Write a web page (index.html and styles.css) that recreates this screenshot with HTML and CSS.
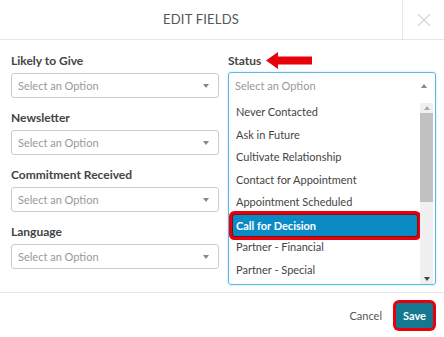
FILE: index.html
```html
<!DOCTYPE html>
<html lang="en">
<head>
  <meta charset="UTF-8" />
  <meta name="viewport" content="width=device-width, initial-scale=1.0" />
  <title>Edit Fields</title>
  <link rel="stylesheet" href="styles.css">
</head>
<body>
  <div class="modal">
    <header>
      <h1 class="title">EDIT FIELDS</h1>
      <button class="close" aria-label="Close">
        <svg width="14" height="14" viewBox="0 0 14 14"><path d="M1 1L13 13M13 1L1 13" stroke="#d6d6d6" stroke-width="1.3" fill="none"/></svg>
      </button>
    </header>
    <div class="fields">
      <div class="col">
        <div class="field">
          <label>Likely to Give</label>
          <div class="select"><span>Select an Option</span><i class="caret down"></i></div>
        </div>
        <div class="field">
          <label>Newsletter</label>
          <div class="select"><span>Select an Option</span><i class="caret down"></i></div>
        </div>
        <div class="field">
          <label>Commitment Received</label>
          <div class="select"><span>Select an Option</span><i class="caret down"></i></div>
        </div>
        <div class="field">
          <label>Language</label>
          <div class="select"><span>Select an Option</span><i class="caret down"></i></div>
        </div>
      </div>
      <div class="col">
        <div class="field">
          <label>Status
            <svg class="arrow" width="46" height="17" viewBox="0 0 46 17"><path d="M0 8.5L12 0V4.5H46V12.5H12V17Z" fill="#e8000b"/></svg>
          </label>
          <div class="dropdown">
            <div class="select open"><span>Select an Option</span><i class="caret up"></i></div>
            <div class="list">
              <ul class="options">
                <li>Never Contacted</li>
                <li>Ask in Future</li>
                <li>Cultivate Relationship</li>
                <li>Contact for Appointment</li>
                <li>Appointment Scheduled</li>
                <li class="selected">Call for Decision</li>
                <li>Partner - Financial</li>
                <li>Partner - Special</li>
              </ul>
              <div class="scrollbar">
                <i class="caret up dark"></i>
                <div class="thumb"></div>
                <div class="track"></div>
                <i class="caret down dark"></i>
              </div>
            </div>
          </div>
        </div>
      </div>
    </div>
    <footer>
      <button class="cancel">Cancel</button>
      <button class="save">Save</button>
    </footer>
  </div>
</body>
</html>
```

FILE: styles.css
```css
body {
  margin: 0;
  font-family: 'Lato', 'Open Sans', sans-serif;
  background: #fff;
  color: #444;
}
.modal {
  width: 444px;
  height: 337px;
  display: flex;
  flex-direction: column;
  overflow: hidden;
}
header {
  display: flex;
  height: 39px;
  border-bottom: 1px solid #e6e6e6;
}
.title {
  flex: 1;
  margin: 0;
  text-align: center;
  font-size: 13px;
  font-weight: normal;
  letter-spacing: 0.2px;
  line-height: 39px;
  color: #555;
}
.close {
  width: 42px;
  border: none;
  border-left: 1px solid #e6e6e6;
  background: none;
  padding: 0;
  display: flex;
  align-items: center;
  justify-content: center;
}
.fields {
  display: grid;
  grid-template-columns: 208px 208px;
  gap: 9px;
  padding: 12px 8px 0 11px;
  height: 240px;
  border-bottom: 1px solid #e6e6e6;
}
.field {
  margin-bottom: 11px;
}
.field label {
  display: flex;
  align-items: center;
  height: 16px;
  font-size: 12px;
  font-weight: bold;
  color: #444;
  margin-bottom: 5px;
}
.arrow {
  margin-left: 5px;
}
.select {
  display: flex;
  align-items: center;
  justify-content: space-between;
  height: 23px;
  padding: 0 9px 0 6px;
  border: 1px solid #ccc;
  border-radius: 3px;
  font-size: 11px;
  color: #999;
}
.caret {
  width: 0;
  height: 0;
  border-left: 3px solid transparent;
  border-right: 3px solid transparent;
}
.caret.down {
  border-top: 4px solid #888;
}
.caret.up {
  border-bottom: 4px solid #888;
}
.caret.dark.down {
  border-top-color: #444;
}
.caret.dark.up {
  border-bottom-color: #aaa;
}
.dropdown {
  border: 1px solid #5ab8e8;
  border-radius: 3px;
  box-shadow: 0 0 2px rgba(90, 184, 232, 0.5);
  height: 211px;
  margin-top: -1px;
}
.select.open {
  border: none;
  padding-right: 8px;
  height: 25px;
}
.list {
  display: flex;
  height: 186px;
  overflow: hidden;
}
.options {
  flex: 1;
  list-style: none;
  margin: 0;
  padding: 3px 3px 0 4px;
  font-size: 11px;
  color: #444;
}
.options li {
  height: 22.5px;
  line-height: 22.5px;
  padding-left: 3px;
}
.options li.selected {
  background: #0b8bc6;
  color: #fff;
  font-weight: bold;
  height: 21px;
  line-height: 21px;
  margin: 1px 0 0.5px;
  border-radius: 2px;
  box-shadow: 0 0 0 1px #7a1010, 0 0 0 4px #e8000b;
}
.scrollbar {
  width: 13px;
  margin: 5px 2px 0 0;
  background: #f0f0f0;
  display: flex;
  flex-direction: column;
  align-items: center;
}
.scrollbar .caret {
  margin: 3px 0;
}
.thumb {
  width: 100%;
  height: 89px;
  background: #c1c1c1;
}
.track {
  flex: 1;
}
footer {
  flex: 1;
  display: flex;
  justify-content: flex-end;
  align-items: center;
  gap: 14px;
  padding-right: 11px;
}
footer button {
  font-family: inherit;
  font-size: 11px;
  border: none;
  cursor: pointer;
}
.cancel {
  background: none;
  color: #555;
  padding: 0;
}
.save {
  background: #137890;
  color: #fff;
  font-weight: bold;
  width: 37px;
  height: 25px;
  border-radius: 3px;
  box-shadow: 0 0 0 3px #e8000b;
}
```
